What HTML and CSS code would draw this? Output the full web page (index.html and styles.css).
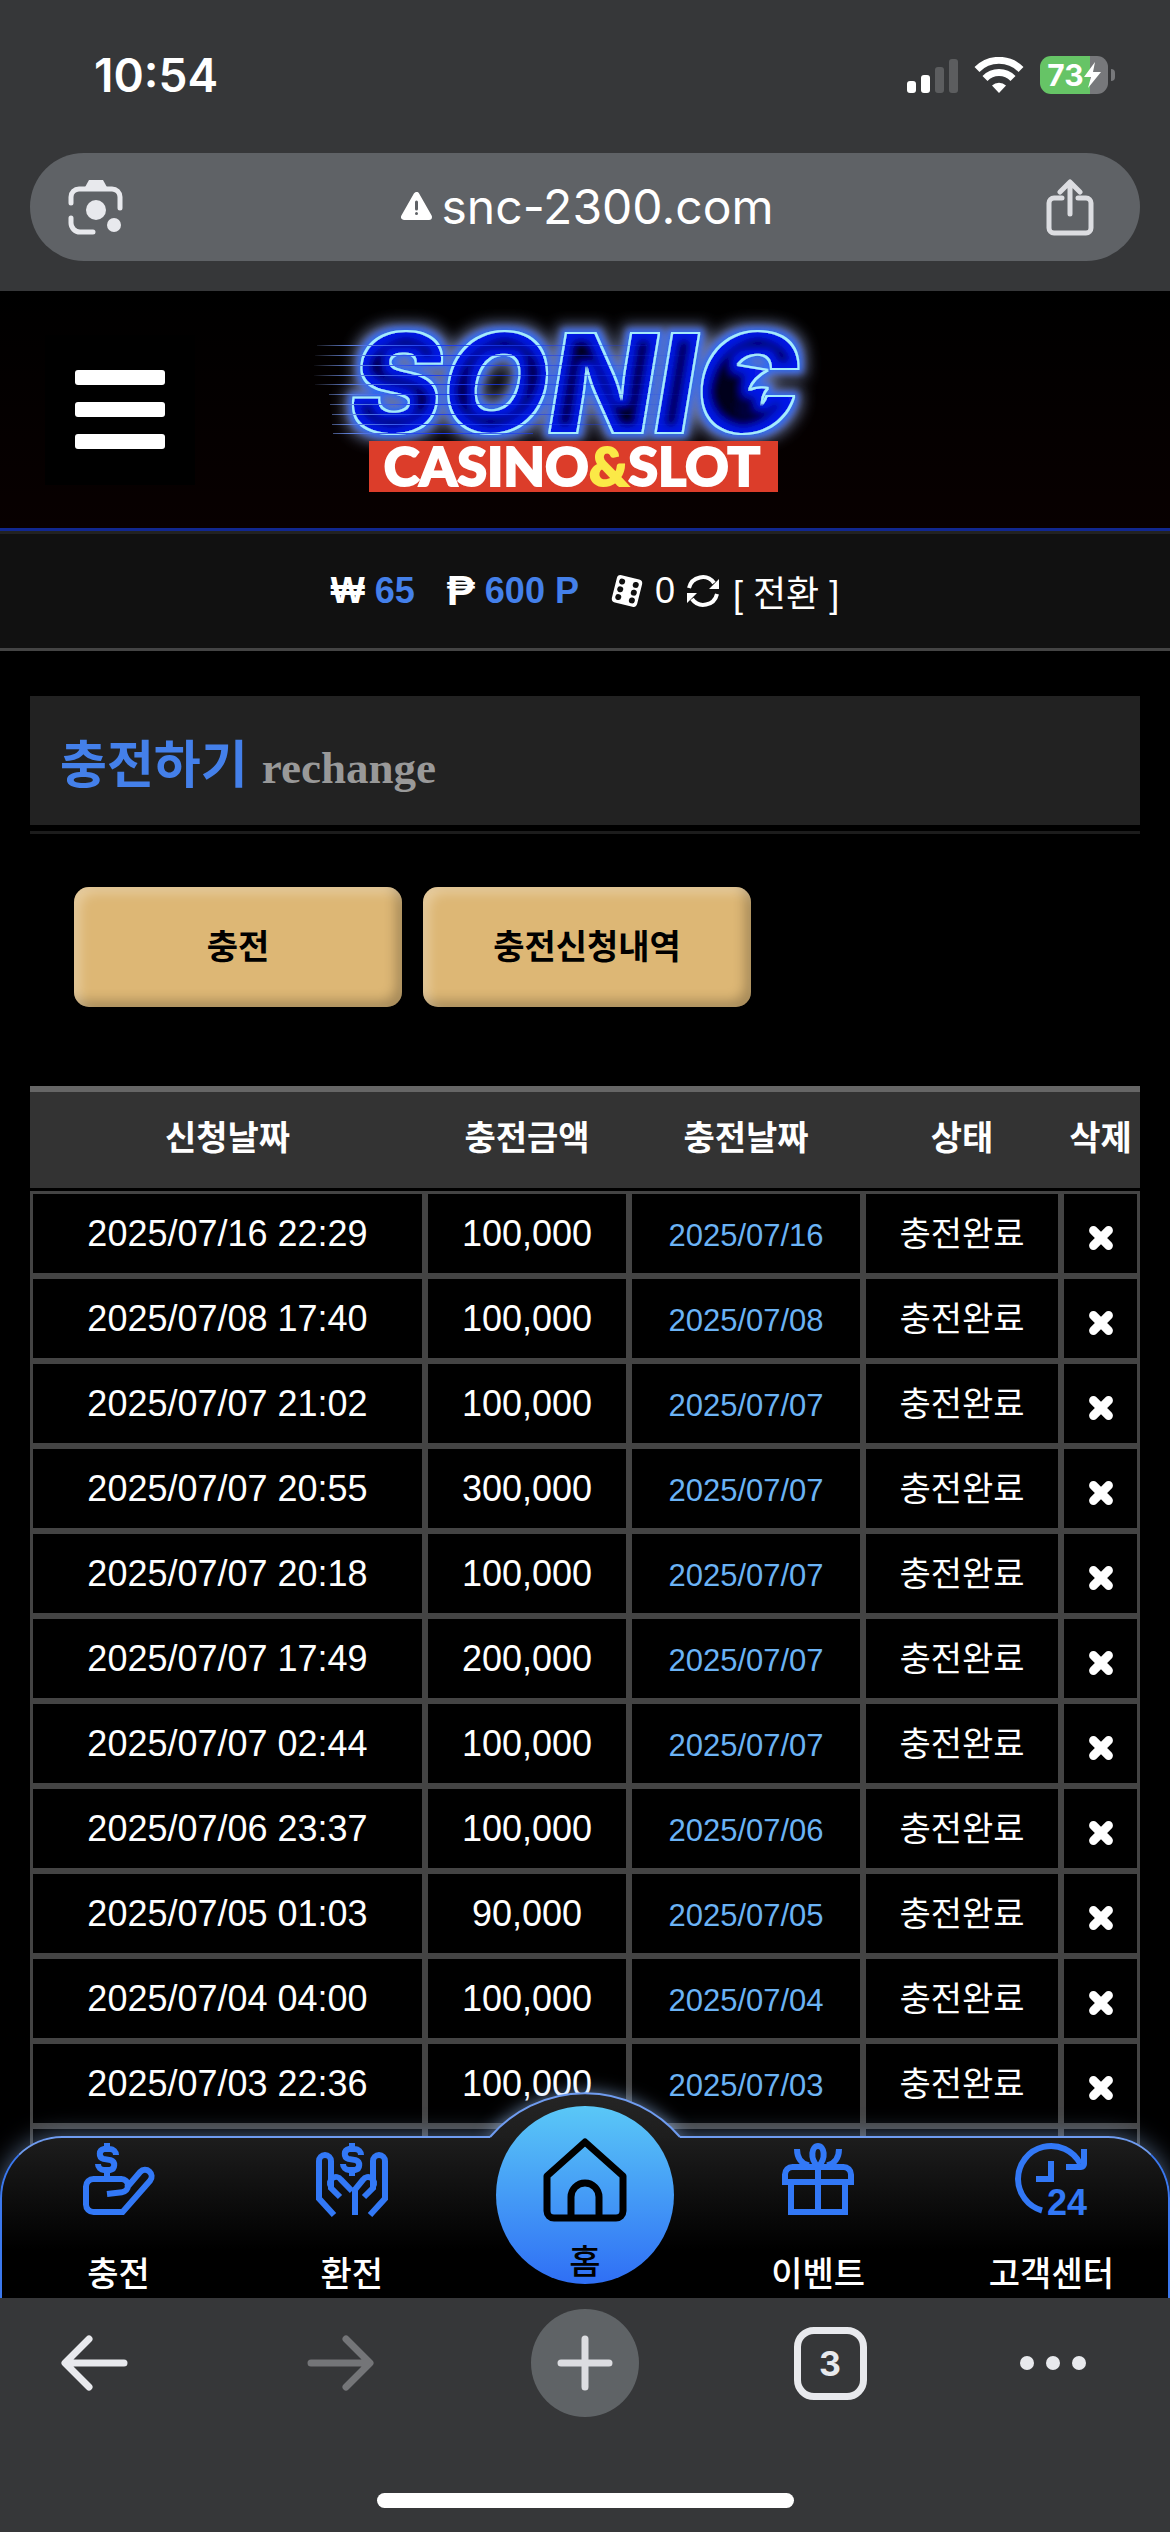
FILE: index.html
```html
<!DOCTYPE html>
<html lang="ko">
<head>
    <meta charset="UTF-8">
    <meta name="viewport" content="width=device-width, initial-scale=1.0">
    <title>충전하기</title>
    <link rel="stylesheet" href="styles.css">
</head>
<body>
    <svg class="symbols" aria-hidden="true">
        <symbol id="icon-x" viewBox="0 0 24 24">
            <path d="M5 5l14 14M19 5L5 19" fill="none" stroke="#fff" stroke-width="8" stroke-linecap="round"/>
        </symbol>
        <symbol id="icon-dollar" viewBox="0 0 10 11">
            <path d="M5 0v2M5 9v2M8 4a2 2 0 0 0-2-2H4a1.7 1.7 0 0 0-.2 3.3l2.4.4A1.7 1.7 0 0 1 6 9H4a2 2 0 0 1-2-2" fill="none" stroke="currentColor" stroke-width="2"/>
        </symbol>
    </svg>

    <header class="browser-top">
        <div class="status-bar">
            <span class="clock">10:54</span>
            <div class="status-icons">
                <svg width="51" height="36" viewBox="0 0 51 36">
                    <rect x="0" y="24" width="9" height="12" rx="3" fill="#fff"/>
                    <rect x="14" y="18" width="9" height="18" rx="3" fill="#fff"/>
                    <rect x="28" y="10" width="9" height="26" rx="3" fill="#5c5d5f"/>
                    <rect x="42" y="2" width="9" height="34" rx="3" fill="#5c5d5f"/>
                </svg>
                <svg width="50" height="36" viewBox="0 0 50 36">
                    <path d="M3 12.500a31 31 0 0 1 44 0" fill="none" stroke="#fff" stroke-width="7"/>
                    <path d="M11 21.500a19.500 19.500 0 0 1 28 0" fill="none" stroke="#fff" stroke-width="7"/>
                    <path d="M25 36l-7-7.500a10 10 0 0 1 14 0z" fill="#fff"/>
                </svg>
                <div class="battery">
                    <span>73</span>
                    <svg width="17" height="26" viewBox="0 0 17 26"><path d="M11 0L0 15h7L4 26l13-16H9z" fill="#fff"/></svg>
                </div>
            </div>
        </div>
        <div class="address-bar">
            <button type="button" aria-label="렌즈">
                <svg width="56" height="56" viewBox="0 0 56 56" fill="none" stroke="#e8e9ed" stroke-width="5" stroke-linecap="round">
                    <path d="M3 24v-6a8 8 0 0 1 8-8h33a8 8 0 0 1 8 8v11M3 39v5a9 9 0 0 0 9 9h13"/>
                    <path d="M16 10l5-9h14l5 9z" fill="#e8e9ed" stroke="none"/>
                    <circle cx="28" cy="31" r="10" fill="#e8e9ed" stroke="none"/>
                    <circle cx="46" cy="46" r="7" fill="#e8e9ed" stroke="none"/>
                </svg>
            </button>
            <div class="url">
                <svg width="31" height="28" viewBox="0 0 31 28">
                    <path d="M15.500 3L3 25h25z" fill="#fff" stroke="#fff" stroke-width="6" stroke-linejoin="round"/>
                    <path d="M15.500 10v7M15.500 21.500v.1" stroke="#5f6266" stroke-width="3" stroke-linecap="round"/>
                </svg>
                <span>snc-2300.com</span>
            </div>
            <button type="button" aria-label="공유">
                <svg width="48" height="57" viewBox="0 0 48 57" fill="none" stroke="#dcdde1" stroke-width="5" stroke-linecap="round" stroke-linejoin="round">
                    <path d="M16 19H8a5 5 0 0 0-5 5v25a5 5 0 0 0 5 5h32a5 5 0 0 0 5-5V24a5 5 0 0 0-5-5h-8M24 35V4M14 13L24 3l10 10"/>
                </svg>
            </button>
        </div>
    </header>

    <div class="page">
        <div class="site-header">
            <button type="button" class="menu-btn" aria-label="메뉴"><i></i><i></i><i></i></button>
            <a href="#" class="logo">
                <svg width="550" height="220" viewBox="310 300 550 220">
                    <defs>
                        <filter id="neon" x="-15%" y="-30%" width="130%" height="160%">
                            <feMorphology in="SourceAlpha" operator="dilate" radius="8" result="wide"/>
                            <feGaussianBlur in="wide" stdDeviation="7" result="haze"/>
                            <feFlood flood-color="#66739a"/>
                            <feComposite in2="haze" operator="in" result="outer"/>
                            <feMorphology in="SourceAlpha" operator="dilate" radius="4" result="near"/>
                            <feGaussianBlur in="near" stdDeviation="3" result="nearBlur"/>
                            <feFlood flood-color="#2f6bf0"/>
                            <feComposite in2="nearBlur" operator="in" result="blueGlow"/>
                            <feMorphology in="SourceAlpha" operator="dilate" radius="1" result="edgeShape"/>
                            <feFlood flood-color="#a5ecff"/>
                            <feComposite in2="edgeShape" operator="in" result="edge"/>
                            <feMorphology in="SourceAlpha" operator="erode" radius="1" result="inside"/>
                            <feFlood flood-color="#0b1fe8"/>
                            <feComposite in2="inside" operator="in" result="body"/>
                            <feMorphology in="SourceAlpha" operator="erode" radius="7" result="core"/>
                            <feGaussianBlur in="core" stdDeviation="4" result="coreBlur"/>
                            <feFlood flood-color="#00001c"/>
                            <feComposite in2="coreBlur" operator="in" result="dark"/>
                            <feMerge>
                                <feMergeNode in="outer"/>
                                <feMergeNode in="blueGlow"/>
                                <feMergeNode in="edge"/>
                                <feMergeNode in="body"/>
                                <feMergeNode in="dark"/>
                            </feMerge>
                        </filter>
                        <linearGradient id="speed" gradientUnits="userSpaceOnUse" x1="312" x2="700" y1="0" y2="0">
                            <stop offset="0" stop-color="#8fa6e0" stop-opacity="0"/>
                            <stop offset=".1" stop-color="#5b7fe0"/>
                            <stop offset=".3" stop-color="#1c3cf0"/>
                            <stop offset="1" stop-color="#1c3cf0" stop-opacity="0"/>
                        </linearGradient>
                    </defs>
                    <g filter="url(#neon)">
                        <text class="logo-name" x="350" y="433">SONIC</text>
                        <path d="M732 364l36 6q-15 8-19 20 9-4 19-2-8 9-6 22l-40 2z"/>
                    </g>
                    <path d="M317 345.500h330M315 355.500h370M314 365.500h360M314 375.500h370M315 384.500h340M329 394.500h380M330 404.500h330M332 414.500h360M332 424.500h380M333 433.500h200" stroke="url(#speed)" stroke-width="1" fill="none"/>
                    <rect x="369" y="441" width="409" height="51" fill="#dc3d2a"/>
                    <text class="logo-sub" x="572" y="486" text-anchor="middle">CASINO<tspan fill="#fbe947" stroke="#fbe947">&amp;</tspan>SLOT</text>
                </svg>
            </a>
        </div>

        <div class="balance">
            <b class="sign">₩</b><b class="amount">65</b>
            <b class="sign point">₱</b><b class="amount">600 P</b>
            <svg class="dice" width="32" height="34" viewBox="0 0 32 34">
                <g transform="rotate(14 16 17)">
                    <rect x="3" y="3" width="26" height="28" rx="4" fill="#fff"/>
                    <g fill="#111">
                        <circle cx="9" cy="9" r="3"/><circle cx="9" cy="17" r="3"/><circle cx="9" cy="25" r="3"/>
                        <circle cx="23" cy="9" r="3"/><circle cx="23" cy="17" r="3"/><circle cx="23" cy="25" r="3"/>
                    </g>
                </g>
            </svg>
            <span>0</span>
            <button type="button" class="refresh" aria-label="새로고침">
                <svg width="32" height="32" viewBox="0 0 32 32" fill="none" stroke="#fff" stroke-width="4">
                    <path d="M2 13A14 14 0 0 1 27 8M30 19A14 14 0 0 1 5 24"/>
                    <path d="M32 4v10H22zM0 28V18h10z" fill="#fff" stroke="none"/>
                </svg>
            </button>
            <a href="#" class="convert">[ 전환 ]</a>
        </div>

        <main>
            <h1 class="title">충전하기 <small>rechange</small></h1>
            <div class="tabs">
                <button type="button">충전</button>
                <button type="button">충전신청내역</button>
            </div>
            <table class="history">
                <colgroup>
                    <col>
                    <col class="col-amount">
                    <col class="col-date">
                    <col class="col-state">
                    <col class="col-delete">
                </colgroup>
                <thead>
                    <tr><th>신청날짜</th><th>충전금액</th><th>충전날짜</th><th>상태</th><th>삭제</th></tr>
                </thead>
                <tbody>
                    <tr><td>2025/07/16 22:29</td><td>100,000</td><td class="done">2025/07/16</td><td class="state">충전완료</td><td><button type="button" aria-label="삭제"><svg><use href="#icon-x"/></svg></button></td></tr>
                    <tr><td>2025/07/08 17:40</td><td>100,000</td><td class="done">2025/07/08</td><td class="state">충전완료</td><td><button type="button" aria-label="삭제"><svg><use href="#icon-x"/></svg></button></td></tr>
                    <tr><td>2025/07/07 21:02</td><td>100,000</td><td class="done">2025/07/07</td><td class="state">충전완료</td><td><button type="button" aria-label="삭제"><svg><use href="#icon-x"/></svg></button></td></tr>
                    <tr><td>2025/07/07 20:55</td><td>300,000</td><td class="done">2025/07/07</td><td class="state">충전완료</td><td><button type="button" aria-label="삭제"><svg><use href="#icon-x"/></svg></button></td></tr>
                    <tr><td>2025/07/07 20:18</td><td>100,000</td><td class="done">2025/07/07</td><td class="state">충전완료</td><td><button type="button" aria-label="삭제"><svg><use href="#icon-x"/></svg></button></td></tr>
                    <tr><td>2025/07/07 17:49</td><td>200,000</td><td class="done">2025/07/07</td><td class="state">충전완료</td><td><button type="button" aria-label="삭제"><svg><use href="#icon-x"/></svg></button></td></tr>
                    <tr><td>2025/07/07 02:44</td><td>100,000</td><td class="done">2025/07/07</td><td class="state">충전완료</td><td><button type="button" aria-label="삭제"><svg><use href="#icon-x"/></svg></button></td></tr>
                    <tr><td>2025/07/06 23:37</td><td>100,000</td><td class="done">2025/07/06</td><td class="state">충전완료</td><td><button type="button" aria-label="삭제"><svg><use href="#icon-x"/></svg></button></td></tr>
                    <tr><td>2025/07/05 01:03</td><td>90,000</td><td class="done">2025/07/05</td><td class="state">충전완료</td><td><button type="button" aria-label="삭제"><svg><use href="#icon-x"/></svg></button></td></tr>
                    <tr><td>2025/07/04 04:00</td><td>100,000</td><td class="done">2025/07/04</td><td class="state">충전완료</td><td><button type="button" aria-label="삭제"><svg><use href="#icon-x"/></svg></button></td></tr>
                    <tr><td>2025/07/03 22:36</td><td>100,000</td><td class="done">2025/07/03</td><td class="state">충전완료</td><td><button type="button" aria-label="삭제"><svg><use href="#icon-x"/></svg></button></td></tr>
                    <tr><td></td><td></td><td></td><td></td><td></td></tr>
                </tbody>
            </table>
        </main>

        <nav class="quick-nav">
            <!-- raised part of the bar behind the home button -->
            <svg class="bump" width="250" height="76" viewBox="0 0 250 76">
                <defs>
                    <linearGradient id="bumpFill" x1="0" y1="0" x2="0" y2="1">
                        <stop offset="0" stop-color="#252525"/>
                        <stop offset="1" stop-color="#1d1d1d"/>
                    </linearGradient>
                </defs>
                <path class="bump-glow" d="M30 75A125 125 0 0 1 220 75v4H30z" fill="url(#bumpFill)"/>
                <path d="M30 75A125 125 0 0 1 220 75" fill="none" stroke="#6f9cf0" stroke-width="2"/>
            </svg>
            <a href="#">
                <svg width="72" height="72" viewBox="0 0 24 24" fill="none" stroke="currentColor" stroke-width="2">
                    <use href="#icon-dollar" x="3" y="0" width="10" height="11"/>
                    <path d="M8 17l5-.600a2.200 2.200 0 0 0 2-2.200A2.200 2.200 0 0 0 12.800 12H3.500A2.500 2.500 0 0 0 1 14.500v6A2.500 2.500 0 0 0 3.500 23h9.700l9.200-10.500a2.200 2.200 0 0 0-3.300-2.900L14.500 15M8 11v1"/>
                </svg>
                <span>충전</span>
            </a>
            <a href="#">
                <svg width="72" height="72" viewBox="0 0 24 24" fill="none" stroke="currentColor" stroke-width="2">
                    <use href="#icon-dollar" x="7" y="0" width="10" height="11"/>
                    <path d="M6 24l-5-5.500V6a2 2 0 0 1 4 0v9l3 3M5 14.500a2 2 0 0 1 3.300-2.300L12 16M18 24l5-5.500V6a2 2 0 0 0-4 0v9l-3 3M19 14.500a2 2 0 0 0-3.300-2.300L13 15.500V24"/>
                </svg>
                <span>환전</span>
            </a>
            <a href="#" class="home">
                <svg width="84" height="84" viewBox="0 0 84 84" fill="none" stroke="#000" stroke-width="7" stroke-linejoin="round">
                    <path d="M42 4L4 38v35a7 7 0 0 0 7 7h62a7 7 0 0 0 7-7V38zM28 80V59a14 14 0 0 1 28 0v21"/>
                </svg>
                <span>홈</span>
            </a>
            <a href="#">
                <svg width="72" height="72" viewBox="0 0 24 24" fill="none" stroke="currentColor" stroke-width="2">
                    <path d="M1 13v-2.500A2.500 2.500 0 0 1 3.500 8h17a2.500 2.500 0 0 1 2.500 2.500V13zM3 13v10h18V13M12 8v15M12 8c-3-3-2-7 0-7s3 4 0 7M5 2c0 3 1.500 5 4 5.500M19 2c0 3-1.500 5-4 5.500"/>
                </svg>
                <span>이벤트</span>
            </a>
            <a href="#">
                <svg width="72" height="72" viewBox="0 0 24 24" fill="none" stroke="currentColor" stroke-width="2">
                    <path d="M21.800 7A11 11 0 0 0 1 12a11 11 0 0 0 8 10.500M23 2v5a1 1 0 0 1-1 1h-5M12 6v6H7"/>
                    <text class="hours" x="24" y="24" text-anchor="end">24</text>
                </svg>
                <span>고객센터</span>
            </a>
        </nav>
    </div>

    <footer class="browser-bottom">
        <div class="toolbar">
            <button type="button" aria-label="뒤로">
                <svg width="68" height="56" viewBox="0 0 68 56" fill="none" stroke="#e8e9ed" stroke-width="7" stroke-linecap="round" stroke-linejoin="round"><path d="M63 28H5M28 4L4 28l24 24"/></svg>
            </button>
            <button type="button" aria-label="앞으로">
                <svg width="68" height="56" viewBox="0 0 68 56" fill="none" stroke="#747578" stroke-width="7" stroke-linecap="round" stroke-linejoin="round"><path d="M5 28h58M40 4l24 24-24 24"/></svg>
            </button>
            <button type="button" aria-label="새 탭">
                <span class="new-tab">
                    <svg width="56" height="56" viewBox="0 0 56 56" stroke="#dcdde1" stroke-width="7" stroke-linecap="round"><path d="M28 4v48M4 28h48"/></svg>
                </span>
            </button>
            <button type="button" aria-label="탭 목록"><span class="tab-count">3</span></button>
            <button type="button" class="more" aria-label="더보기">
                <svg width="68" height="16" viewBox="0 0 68 16" fill="#e8e9ed"><circle cx="8" cy="8" r="7"/><circle cx="34" cy="8" r="7"/><circle cx="60" cy="8" r="7"/></svg>
            </button>
        </div>
        <div class="home-indicator"></div>
    </footer>
</body>
</html>
```
FILE: styles.css
```css
* {
    box-sizing: border-box;
}
body {
    display: flex;
    flex-direction: column;
    height: 100vh;
    margin: 0;
    overflow: hidden;
    background-color: #000;
    color: #fff;
    font-family: "Liberation Sans", "Noto Sans CJK KR", sans-serif;
    font-size: 36px;
}
button {
    padding: 0;
    border: none;
    background: none;
    color: inherit;
    font: inherit;
    cursor: pointer;
}
a {
    color: inherit;
    text-decoration: none;
}
svg {
    display: block;
}
.symbols {
    display: none;
}

/* browser top */
.browser-top {
    padding: 0 30px 30px;
    background-color: #363739;
}
.status-bar {
    display: flex;
    justify-content: space-between;
    align-items: center;
    height: 153px;
    padding: 0 25px 4px 64px;
}
.clock {
    font-family: Inter, sans-serif;
    font-size: 46px;
    font-weight: 600;
}
.status-icons {
    display: flex;
    align-items: center;
    gap: 16px;
}
.battery {
    position: relative;
    display: flex;
    align-items: center;
    justify-content: center;
    width: 68px;
    height: 38px;
    margin-right: 7px;
    border-radius: 11px;
    background: linear-gradient(90deg, #66c466 50px, #77787b 50px);
    font-family: Inter, sans-serif;
    font-size: 30px;
    font-weight: 700;
}
.battery::after {
    content: "";
    position: absolute;
    right: -7px;
    top: 13px;
    width: 4px;
    height: 12px;
    border-radius: 0 4px 4px 0;
    background-color: #77787b;
}
.address-bar {
    display: flex;
    justify-content: space-between;
    align-items: center;
    height: 108px;
    padding: 0 46px 0 38px;
    border-radius: 54px;
    background-color: #5f6266;
}
.url {
    display: flex;
    align-items: center;
    gap: 10px;
    padding: 0 0 2px 4px;
    font-family: Inter, sans-serif;
    font-size: 48px;
}

/* page */
.page {
    position: relative;
    flex: 1;
    min-height: 0;
    overflow: hidden;
}
.site-header {
    display: grid;
    grid-template-columns: 150px 1fr 150px;
    align-items: center;
    height: 240px;
    padding: 0 45px;
    border-bottom: 3px solid #10278f;
    background: linear-gradient(#000, #080000);
}
.menu-btn {
    display: flex;
    flex-direction: column;
    align-items: center;
    justify-content: center;
    gap: 17px;
    height: 150px;
    background-color: #000;
}
.menu-btn i {
    width: 90px;
    height: 15px;
    border-radius: 3px;
    background-color: #fff;
}
.logo {
    justify-self: center;
}
.logo svg {
    overflow: visible;
}
.logo-name {
    font-family: Inter, sans-serif;
    font-size: 138px;
    font-weight: 900;
    font-style: italic;
}
.logo-sub {
    fill: #fff;
    stroke: #fff;
    stroke-width: 2px;
    font-family: Lato, sans-serif;
    font-size: 54px;
    font-weight: 900;
}
.balance {
    display: flex;
    justify-content: center;
    align-items: center;
    height: 120px;
    border-top: 3px solid #222;
    border-bottom: 3px solid #444;
    background-color: #111;
}
.sign {
    margin-right: 10px;
}
.point {
    font-size: 42px;
}
.amount {
    margin-right: 32px;
    color: #4480ea;
}
.dice {
    margin-right: 12px;
}
.refresh {
    margin: 0 14px 0 12px;
}
.convert {
    font-size: 36px;
}

main {
    padding: 45px 30px 0;
}
.title {
    position: relative;
    height: 129px;
    margin: 0 0 62px;
    padding: 5px 30px 0;
    background-color: #222;
    color: #4480ea;
    font-size: 51px;
    line-height: 129px;
}
.title::after {
    content: "";
    position: absolute;
    left: 0;
    right: 0;
    bottom: -9px;
    height: 3px;
    background-color: #1c1c1c;
}
.title small {
    color: #999;
    font-family: "Liberation Serif", serif;
    font-size: 45px;
}
.tabs {
    display: flex;
    gap: 21px;
    padding: 0 44px;
    margin-bottom: 79px;
}
.tabs button {
    width: 328px;
    height: 120px;
    padding-bottom: 5px;
    border-radius: 15px;
    background-color: #ddb775;
    box-shadow: inset 6px 6px 12px rgba(255, 255, 255, 0.3), inset -6px -6px 12px rgba(0, 0, 0, 0.25);
    color: #000;
    font-size: 34px;
    font-weight: 700;
}

.history {
    width: 100%;
    border-top: 6px solid #666;
    border-spacing: 0;
    table-layout: fixed;
    text-align: center;
}
.col-amount {
    width: 204px;
}
.col-date {
    width: 234px;
}
.col-state {
    width: 198px;
}
.col-delete {
    width: 79px;
}
.history th {
    height: 99px;
    padding: 0 0 9px;
    border-bottom: 3px solid #000;
    background-color: #333;
    font-size: 34px;
}
.history td {
    height: 85px;
    padding: 0;
    border: 3px solid #444;
    line-height: 50px;
}
.history .done {
    padding-top: 4px;
    color: #6bb3f5;
    font-size: 31px;
}
.history .state {
    font-size: 34px;
}
.history td button {
    display: block;
    margin: 8px auto 0;
}
.history td svg {
    width: 26px;
    height: 26px;
}

/* bottom menu over the page */
.quick-nav {
    position: absolute;
    left: 0;
    right: 0;
    bottom: 0;
    display: grid;
    grid-template-columns: repeat(5, 1fr);
    height: 162px;
    border: 2px solid #3b78ee;
    border-top-color: #6f9cf0;
    border-bottom: none;
    border-radius: 62px 62px 0 0;
    background: linear-gradient(#1d1d1d, #000 70%);
    box-shadow: 0 0 24px rgba(160, 200, 255, 0.5);
    font-size: 34px;
    font-weight: 500;
}
.quick-nav a {
    display: flex;
    flex-direction: column;
    align-items: center;
    justify-content: space-between;
    padding: 5px 0 3px;
    line-height: 42px;
}
.quick-nav a svg {
    overflow: visible;
    color: #3278f6;
}
.quick-nav .home {
    z-index: 1;
    justify-self: center;
    width: 178px;
    height: 178px;
    margin-top: -32px;
    padding: 32px 0 1px;
    border-radius: 50%;
    background: linear-gradient(#5ac8f7, #2f6ff5);
    color: #000;
}
.bump {
    position: absolute;
    left: 50%;
    bottom: 160px;
    margin-left: -125px;
}
.bump-glow {
    filter: drop-shadow(0 0 9px rgba(160, 200, 255, 0.7));
}
.hours {
    fill: currentColor;
    stroke: none;
    font-family: "Liberation Sans", sans-serif;
    font-size: 12px;
    font-weight: 700;
}

/* browser bottom */
.browser-bottom {
    display: flex;
    flex-direction: column;
    align-items: center;
    justify-content: space-between;
    height: 234px;
    padding: 11px 0 24px;
    background-color: #363739;
}
.toolbar {
    display: grid;
    grid-template-columns: 190fr 300fr 190fr 300fr 190fr;
    width: 100%;
}
.toolbar button {
    display: flex;
    align-items: center;
    justify-content: center;
    height: 108px;
}
.toolbar .more {
    padding-right: 44px;
}
.new-tab {
    display: flex;
    align-items: center;
    justify-content: center;
    width: 108px;
    height: 108px;
    border-radius: 50%;
    background-color: #5f6366;
}
.tab-count {
    width: 73px;
    height: 73px;
    border: 7px solid #e8e9ed;
    border-radius: 20px;
    color: #e8e9ed;
    font-family: Inter, sans-serif;
    font-size: 34px;
    font-weight: 700;
    line-height: 59px;
}
.home-indicator {
    width: 417px;
    height: 15px;
    border-radius: 8px;
    background-color: #fff;
}
```
